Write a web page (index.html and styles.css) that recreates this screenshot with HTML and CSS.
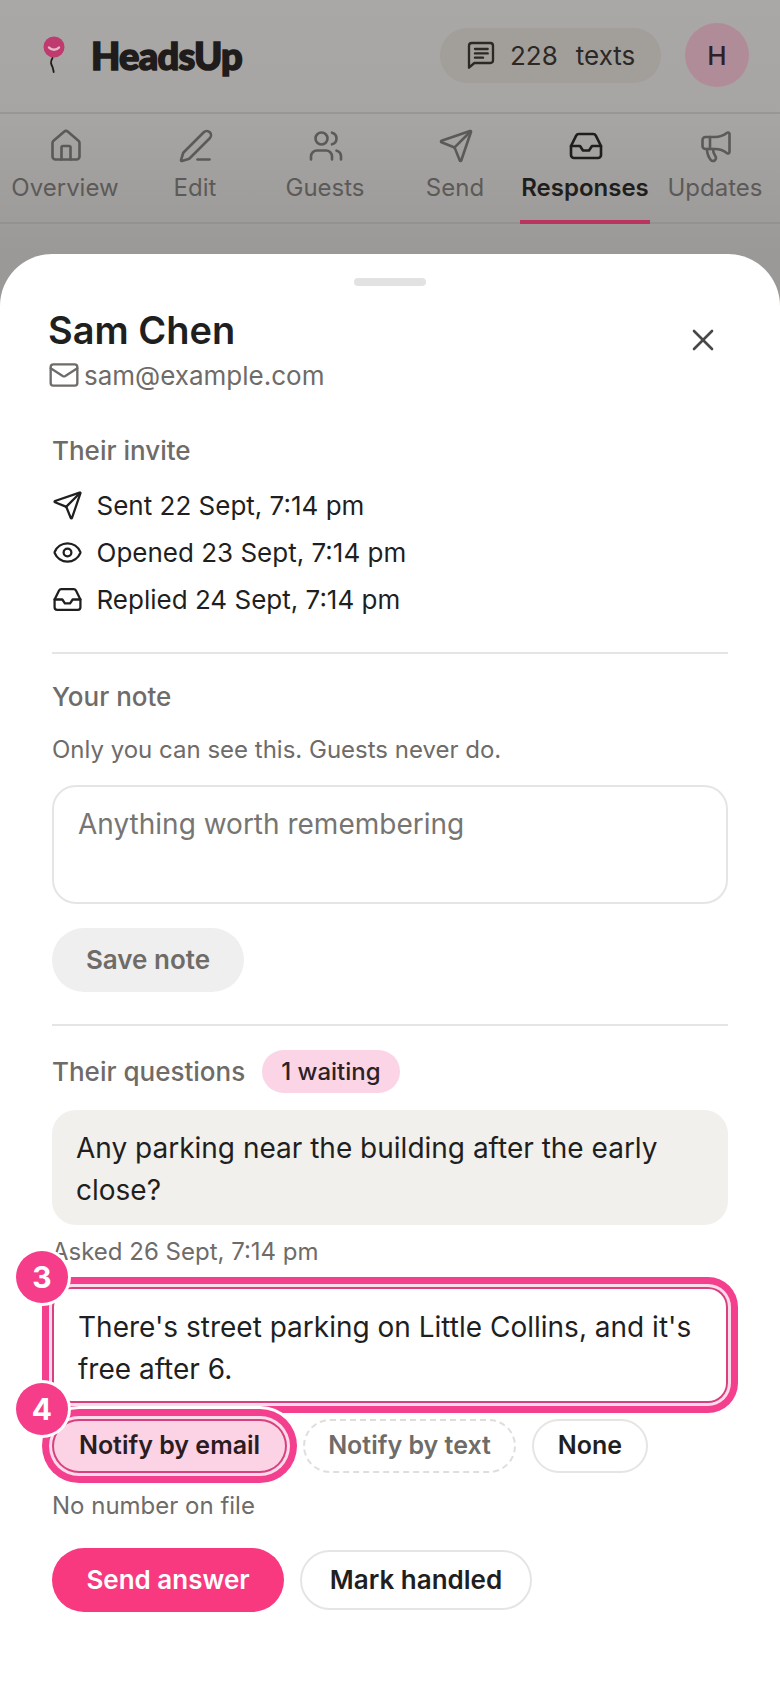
FILE: index.html
```html
<!DOCTYPE html>
<html lang="en">
<head>
<meta charset="UTF-8" />
<meta name="viewport" content="width=device-width, initial-scale=1" />
<title>HeadsUp - Responses</title>
<link rel="stylesheet" href="styles.css">
</head>
<body>

<header class="topbar">
  <div class="brand">
    <svg class="balloon" width="24" height="38" viewBox="0 0 24 38" fill="none">
      <circle cx="12" cy="11" r="10.5" fill="#bf3a6e"/>
      <path d="M7 11.5c2.5 3 7.500 3 10 0" stroke="#e6b9c8" stroke-width="2.400" stroke-linecap="round"/>
      <path d="M10.500 22c-2.500 4-1.500 6 0 9 .6 1.400.8 3 1.200 5" stroke="#1f1d1c" stroke-width="1.800" stroke-linecap="round"/>
    </svg>
    <span class="brand-name">HeadsUp</span>
  </div>
  <div class="top-right">
    <div class="credits">
      <svg class="icon credits-icon" viewBox="0 0 24 24"><path d="M21 16a2 2 0 0 1-2 2H7l-4 3.500V5a2 2 0 0 1 2-2h14a2 2 0 0 1 2 2z"/><path d="M7.500 7.500h9.500"/><path d="M7.500 10.800h9.500"/><path d="M7.500 14h6"/></svg>
      <span>228</span><span>texts</span>
    </div>
    <div class="avatar">H</div>
  </div>
</header>

<nav class="tabs">
  <div class="tab">
    <svg class="icon" viewBox="0 0 24 24"><path d="M15 21v-8a1 1 0 0 0-1-1h-4a1 1 0 0 0-1 1v8"/><path d="M3 10a2 2 0 0 1 .709-1.528l7-5.999a2 2 0 0 1 2.582 0l7 5.999A2 2 0 0 1 21 10v9a2 2 0 0 1-2 2H5a2 2 0 0 1-2-2z"/></svg>
    <span>Overview</span>
  </div>
  <div class="tab">
    <svg class="icon" viewBox="0 0 24 24"><path d="M13 21h8"/><path d="M21.174 6.812a1 1 0 0 0-3.986-3.987L3.842 16.174a2 2 0 0 0-.5.830l-1.321 4.352a.5.5 0 0 0 .623.622l4.353-1.320a2 2 0 0 0 .830-.497z"/></svg>
    <span>Edit</span>
  </div>
  <div class="tab">
    <svg class="icon" viewBox="0 0 24 24"><path d="M16 21v-2a4 4 0 0 0-4-4H6a4 4 0 0 0-4 4v2"/><path d="M16 3.128a4 4 0 0 1 0 7.744"/><path d="M22 21v-2a4 4 0 0 0-3-3.870"/><circle cx="9" cy="7" r="4"/></svg>
    <span>Guests</span>
  </div>
  <div class="tab">
    <svg class="icon" viewBox="0 0 24 24"><path d="M14.536 21.686a.5.5 0 0 0 .937-.024l6.500-19a.496.496 0 0 0-.635-.635l-19 6.500a.5.5 0 0 0-.024.937l7.930 3.180a2 2 0 0 1 1.112 1.110z"/><path d="m21.854 2.147-10.940 10.939"/></svg>
    <span>Send</span>
  </div>
  <div class="tab tab-active">
    <svg class="icon" viewBox="0 0 24 24"><path d="M22 12h-6l-2 3h-4l-2-3H2"/><path d="M5.450 5.110 2 12v6a2 2 0 0 0 2 2h16a2 2 0 0 0 2-2v-6l-3.450-6.890A2 2 0 0 0 16.760 4H7.240a2 2 0 0 0-1.790 1.110z"/></svg>
    <span>Responses</span>
  </div>
  <div class="tab">
    <svg class="icon" viewBox="0 0 24 24"><path d="M11 6a13 13 0 0 0 8.400-2.800A1 1 0 0 1 21 4v12a1 1 0 0 1-1.600.8A13 13 0 0 0 11 14H5a2 2 0 0 1-2-2V8a2 2 0 0 1 2-2z"/><path d="M6 14a12 12 0 0 0 2.400 7.200 2 2 0 0 0 3.200-2.400A8 8 0 0 1 10 14"/><path d="M8 6v8"/></svg>
    <span>Updates</span>
  </div>
</nav>

<main class="sheet">
  <div class="handle"></div>

  <div class="guest-head">
    <div>
      <h1 class="guest-name">Sam Chen</h1>
      <div class="guest-mail">
        <svg class="icon mail-icon" viewBox="0 0 24 24"><path d="m22 7-8.991 5.727a2 2 0 0 1-2.009 0L2 7"/><rect x="2" y="4" width="20" height="16" rx="2"/></svg>
        <span>sam@example.com</span>
      </div>
    </div>
    <svg class="icon close-icon" viewBox="0 0 24 24"><path d="M18 6 6 18"/><path d="m6 6 12 12"/></svg>
  </div>

  <section class="invite">
    <h2 class="label">Their invite</h2>
    <ul class="timeline">
      <li>
        <svg class="icon" viewBox="0 0 24 24"><path d="M14.536 21.686a.5.5 0 0 0 .937-.024l6.500-19a.496.496 0 0 0-.635-.635l-19 6.500a.5.5 0 0 0-.024.937l7.930 3.180a2 2 0 0 1 1.112 1.110z"/><path d="m21.854 2.147-10.940 10.939"/></svg>
        Sent 22 Sept, 7:14 pm
      </li>
      <li>
        <svg class="icon" viewBox="0 0 24 24"><path d="M2.062 12.348a1 1 0 0 1 0-.696 10.750 10.750 0 0 1 19.876 0 1 1 0 0 1 0 .696 10.750 10.750 0 0 1-19.876 0"/><circle cx="12" cy="12" r="3"/></svg>
        Opened 23 Sept, 7:14 pm
      </li>
      <li>
        <svg class="icon" viewBox="0 0 24 24"><path d="M22 12h-6l-2 3h-4l-2-3H2"/><path d="M5.450 5.110 2 12v6a2 2 0 0 0 2 2h16a2 2 0 0 0 2-2v-6l-3.450-6.890A2 2 0 0 0 16.760 4H7.240a2 2 0 0 0-1.790 1.110z"/></svg>
        Replied 24 Sept, 7:14 pm
      </li>
    </ul>
  </section>

  <section class="note">
    <h2 class="label">Your note</h2>
    <p class="hint hint-note">Only you can see this. Guests never do.</p>
    <div class="note-box">Anything worth remembering</div>
    <button class="btn btn-muted">Save note</button>
  </section>

  <section class="questions">
    <div class="questions-head">
      <h2 class="label">Their questions</h2>
      <span class="waiting">1 waiting</span>
    </div>
    <div class="bubble">Any parking near the building after the early close?</div>
    <p class="hint hint-asked">Asked 26 Sept, 7:14 pm</p>

    <div class="reply-box ring">
      There's street parking on Little Collins, and it's free after 6.
      <span class="step">3</span>
    </div>

    <div class="chips">
      <button class="chip chip-on ring">
        Notify by email
        <span class="step">4</span>
      </button>
      <button class="chip chip-off">Notify by text</button>
      <button class="chip chip-none">None</button>
    </div>
    <p class="hint hint-number">No number on file</p>

    <div class="actions">
      <button class="btn btn-send">Send answer</button>
      <button class="btn btn-plain">Mark handled</button>
    </div>
  </section>
</main>

</body>
</html>
```

FILE: styles.css
```css
*{box-sizing:border-box;}
html,body{margin:0; padding:0;}
body{width:780px; height:1688px; display:flex; flex-direction:column; overflow:hidden; font-family:Inter,"Liberation Sans",sans-serif; color:#1f1f1f; background:linear-gradient(180deg,#aaa8a6 0,#a7a5a3 120px,#9b9997 254px);}
h1,h2,p,ul{margin:0; padding:0;}
ul{list-style:none;}
button{font-family:inherit;}

.icon{width:36px; height:36px; fill:none; stroke:currentColor; stroke-width:1.75; stroke-linecap:round; stroke-linejoin:round; flex:none;}

/* top bar */
.topbar{height:114px; flex:none; display:flex; justify-content:space-between; align-items:center; padding:0 31px 2px 42px; border-bottom:2px solid #999795;}
.brand{display:flex; align-items:center; gap:25px;}
.balloon{display:block;}
.brand-name{font-family:Lato,Inter,sans-serif; font-size:38px; font-weight:900; letter-spacing:-.7px; color:#1f1c1b; -webkit-text-stroke:1.600px #1f1c1b;}
.top-right{display:flex; align-items:center; gap:24px;}
.credits{width:221px; height:55px; border-radius:28px; background:#a29f9a; display:flex; align-items:center; padding-left:25px; font-size:26px; color:#2b2826;}
.credits-icon{width:32px; height:32px; margin-right:13px;}
.credits span+span{margin-left:18px;}
.avatar{width:64px; height:64px; border-radius:50%; background:#b08c99; color:#2f1f26; display:flex; align-items:center; justify-content:center; font-size:26px; font-weight:500;}

/* tabs */
.tabs{height:110px; flex:none; display:grid; grid-template-columns:repeat(6,130px); border-bottom:2px solid #949290;}
.tab{display:flex; flex-direction:column; align-items:center; padding-top:14px; gap:9px; font-size:24px; color:#5c5a58; height:110px;}
.tab .icon{margin-left:2px;}
.tab-active{color:#1f1e1d; font-weight:600; border-bottom:4px solid #b9345f;}

/* sheet */
.sheet{flex:1; margin-top:30px; background:#fff; border-radius:52px 52px 0 0; padding:24px 52px 0;}
.handle{width:72px; height:8px; border-radius:4px; background:#e2e2e2; margin:0 auto 21px;}
.guest-head{display:flex; justify-content:space-between; align-items:flex-start; margin-left:-4px;}
.guest-name{font-size:38px; line-height:46px; font-weight:600; color:#1f1f1f;}
.guest-mail{display:flex; align-items:center; gap:4px; margin-top:4px; height:36px; font-size:26px; color:#6e6b68;}
.mail-icon{width:32px; height:32px;}
.close-icon{margin:15px 7px 0 0; color:#4a4846;}

.label{font-size:26px; line-height:34px; font-weight:500; color:#6e6b68;}
.hint{font-size:24px; line-height:34px; color:#6e6b68;}

.invite{margin-top:41px; padding-bottom:33px; border-bottom:2px solid #e5e5e3;}
.timeline{margin-top:17px; display:flex; flex-direction:column; gap:7px;}
.timeline li{display:flex; align-items:center; gap:13.500px; height:40px; font-size:26px; color:#1f1f1f;}
.timeline .icon{width:31px; height:31px;}

.note{margin-top:26px; padding-bottom:32px; border-bottom:2px solid #e5e5e3;}
.hint-note{margin-top:19px;}
.note-box{margin-top:18px; height:119px; border:2px solid #e5e5e3; border-radius:24px; padding:16px 24px; font-size:28px; line-height:42px; color:#777572;}

.btn{height:64px; border:none; border-radius:32px; font-size:26px; font-weight:600; padding:0 0 2px; white-space:nowrap;}
.btn-muted{display:block; margin-top:24px; width:192px; background:#efefef; color:#6e6b68;}

.questions{margin-top:24px;}
.questions-head{display:flex; align-items:center; gap:17px; height:43px;}
.waiting{height:43px; border-radius:22px; background:#fbd5e6; padding:0 19px; display:flex; align-items:center; font-size:24px; font-weight:500; color:#2c2226;}
.bubble{margin-top:17px; height:115px; background:#f2f0ec; border-radius:24px; padding:18px 24px; font-size:28px; line-height:41.500px;}
.hint-asked{margin-top:10px;}

/* the two highlighted controls */
.ring{position:relative; box-shadow:0 0 0 2px #d9407f inset,0 0 0 3px #fcdcea,0 0 0 10px #f43f8e,0 0 0 13px #fff;}
.reply-box{margin-top:18px; height:116px; border-radius:20px; padding:20px 26px; font-size:28px; line-height:41.500px; background:#fff;}
.step{position:absolute; left:-36px; top:-36px; width:52px; height:52px; border-radius:50%; box-shadow:0 0 0 3px #fff; background:#f53d8a; color:#fff; display:flex; align-items:center; justify-content:center; font-size:30px; line-height:1; font-weight:700;}

.chips{margin-top:16px; display:flex; gap:16px;}
.chip{height:54px; border-radius:27px; border:2px solid #e5e5e3; background:#fff; padding:0 0 2px; font-size:25px; font-weight:600; color:#1f1f1f; white-space:nowrap;}
.chip-on{border:none; background:#fbd3e4; color:#2b1c22; width:235px;}
.chip-off{border:2px dashed #dededc; color:#6e6b68; width:213px;}
.chip-none{width:116px;}
.hint-number{margin-top:16px;}

.actions{margin-top:25px; display:flex; align-items:center; gap:16px;}
.btn-send{width:232px; background:#f8397f; color:#fff;}
.btn-plain{width:232px; height:60px; background:#fff; border:2px solid #e5e5e3; color:#1f1f1f;}
```
